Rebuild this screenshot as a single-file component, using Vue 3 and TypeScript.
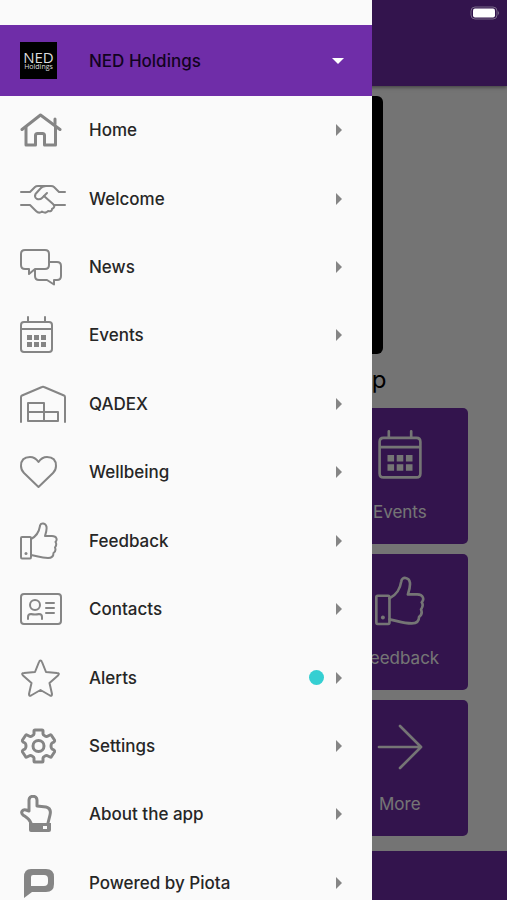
<script setup lang="ts">
interface Shape {
  d: string
  fill?: boolean
}
interface Icon {
  w: number
  h: number
  stroke: number
  shapes: Shape[]
}
interface MenuItem {
  label: string
  icon: string
  alert?: boolean
}

const icons: Record<string, Icon> = {
  home: {
    w: 42, h: 34, stroke: 3,
    shapes: [
      { d: 'M2 16.5 20.5 2 40 16.5' },
      { d: 'M6 14.5V32H15.5V22.5Q15.5 20.5 17.5 20.5H22.5Q24.5 20.5 24.5 22.5V32H35.5V14' },
      { d: 'M35 11V6' },
    ],
  },
  handshake: {
    w: 46, h: 30, stroke: 2,
    shapes: [
      { d: 'M1 8H10L15 3Q16 2 18 2H31Q33 2 34 3L39 8H45' },
      { d: 'M26 2Q22 2 20 5L15.5 10Q14 13 17 15Q20 16 22 14L27 9' },
      { d: 'M24 12 33 20Q36 23 32 25Q32 28 28 27Q26 30 22 27.5Q19 30 16 27L10 21H1' },
      { d: 'M34 21H45' },
    ],
  },
  chat: {
    w: 42, h: 38, stroke: 2,
    shapes: [
      { d: 'M5 2H25Q29 2 29 6V17Q29 21 25 21H15L9 26V21H5Q1 21 1 17V6Q1 2 5 2Z' },
      { d: 'M29 14H37Q41 14 41 18V28Q41 32 37 32H34V36.5L27 32H19Q15 32 15 28V22' },
    ],
  },
  calendar: {
    w: 33, h: 38, stroke: 2,
    shapes: [
      { d: 'M4 6H29Q32 6 32 9V33Q32 36 29 36H4Q1 36 1 33V9Q1 6 4 6ZM1 13H32M8 6V1M25 6V1' },
      { d: 'M7 19h5v5h-5zM14 19h5v5h-5zM21 19h5v5h-5zM7 26h5v5h-5zM14 26h5v5h-5zM21 26h5v5h-5z', fill: true },
    ],
  },
  warehouse: {
    w: 46, h: 38, stroke: 2,
    shapes: [
      { d: 'M1 37V12Q1 11 2 10.5L22 2Q23 1.5 24 2L44 10.5Q45 11 45 12V37' },
      { d: 'M8 36V18H24V36ZM8 27H38V36H8' },
    ],
  },
  heart: {
    w: 38, h: 34, stroke: 2,
    shapes: [
      { d: 'M18.5 32 4 18Q1 15 1 11Q1 2 10 2Q15 2 18.5 7Q22 2 27 2Q36 2 36 11Q36 15 33 18Z' },
    ],
  },
  thumb: {
    w: 38, h: 38, stroke: 2,
    shapes: [
      { d: 'M2 15H10Q11 15 11 16V35Q11 36.5 10 36.5H2Q1 36.5 1 35V16Q1 15 2 15Z' },
      { d: 'M11 17C17 14 19 10 20 4C20.5 0 26 1 26.5 5C27 8 26 11 25 14H32C37 14 37.5 18 35.5 20C37 22 36 24 35 25.5C36 28 35 30 33.5 31C33.5 35 31 36 28 36C21 36 17 34 11 33' },
      { d: 'M4.5 31.5a1.5 1.5 0 1 0 3 0a1.5 1.5 0 1 0 -3 0', fill: true },
    ],
  },
  card: {
    w: 42, h: 34, stroke: 2,
    shapes: [
      { d: 'M4 2H38Q41 2 41 5V29Q41 32 38 32H4Q1 32 1 29V5Q1 2 4 2Z' },
      { d: 'M10 13a5 5 0 1 0 10 0a5 5 0 1 0 -10 0M8 27V25Q8 22 11 22Q15 23 19 22Q22 22 22 25V27M26 11H34M26 16H34M26 21H34' },
    ],
  },
  star: {
    w: 42, h: 38, stroke: 2,
    shapes: [
      { d: 'M20.5 1.5Q21.5 1.5 22 3L26 13L37 14Q40 14 38 16.5L29.500 24L32 35Q32 37.5 30 36.5L20.5 31L11 36.5Q9 37.5 9 35L11.5 24L3 16.5Q1 14 4 14L15 13L19 3Q19.5 1.5 20.5 1.5Z' },
    ],
  },
  gear: {
    w: 37, h: 36, stroke: 3,
    shapes: [
      { d: 'M15 2H22Q23 2 23 3V6Q23 7 25 8Q26.500 9 28 8L30 7Q31 6.500 31.500 7.500L34.500 12Q35 13 34 14L32 15Q31 16 31 18Q31 20 32 21L34 22Q35 23 34.500 24L31.500 28.500Q31 29.500 30 29L28 28Q26.500 27 25 28Q23 29 23 30V33Q23 34 22 34H15Q14 34 14 33V30Q14 29 12 28Q10.500 27 9 28L7 29Q6 29.500 5.500 28.500L2.500 24Q2 23 3 22L5 21Q6 20 6 18Q6 16 5 15L3 14Q2 13 2.500 12L5.500 7.500Q6 6.500 7 7L9 8Q10.500 9 12 8Q14 7 14 6V3Q14 2 15 2Z' },
      { d: 'M13 18a5.5 5.5 0 1 0 11 0a5.5 5.5 0 1 0 -11 0' },
    ],
  },
  pointer: {
    w: 33, h: 38, stroke: 3,
    shapes: [
      { d: 'M11 28C9 23 6 22 3 20C0 17 3 14 6 15L9 16V5C9 0 17 0 17 5V11L26 12C30 13 31 16 30 20L28 28' },
      { d: 'M9 28H31V35Q31 37 29 37H11Q9 37 9 35ZM23 31V34H27V31Z', fill: true },
    ],
  },
  piota: {
    w: 34, h: 30, stroke: 2,
    shapes: [
      { d: 'M11 1H26Q34 1 34 9V16Q34 24 26 24H12L4 30V9Q4 1 11 1ZM13 7Q11 7 11 9V18H24Q28 18 28 14V11Q28 7 24 7Z', fill: true },
    ],
  },
  arrow: {
    w: 38, h: 38, stroke: 2,
    shapes: [{ d: 'M3 19H35M19 3 35 19 19 35' }],
  },
}

const menu: MenuItem[] = [
  { label: 'Home', icon: 'home' },
  { label: 'Welcome', icon: 'handshake' },
  { label: 'News', icon: 'chat' },
  { label: 'Events', icon: 'calendar' },
  { label: 'QADEX', icon: 'warehouse' },
  { label: 'Wellbeing', icon: 'heart' },
  { label: 'Feedback', icon: 'thumb' },
  { label: 'Contacts', icon: 'card' },
  { label: 'Alerts', icon: 'star', alert: true },
  { label: 'Settings', icon: 'gear' },
  { label: 'About the app', icon: 'pointer' },
  { label: 'Powered by Piota', icon: 'piota' },
]

const tiles: MenuItem[] = [
  { label: 'Events', icon: 'calendar' },
  { label: 'Feedback', icon: 'thumb' },
  { label: 'More', icon: 'arrow' },
]
</script>

<template>
  <div class="app">
    <div class="page">
      <header class="topbar"></header>
      <main class="content">
        <div class="hero"></div>
        <h1 class="title">p</h1>
        <div class="tiles">
          <button v-for="tile in tiles" :key="tile.label" type="button" class="tile">
            <svg class="tile-icon" :viewBox="`0 0 ${icons[tile.icon].w} ${icons[tile.icon].h}`" :stroke-width="icons[tile.icon].stroke" aria-hidden="true">
              <path v-for="(s, i) in icons[tile.icon].shapes" :key="i" :d="s.d" :class="{ solid: s.fill }" />
            </svg>
            <span>{{ tile.label }}</span>
          </button>
        </div>
      </main>
      <footer class="bottombar"></footer>
    </div>
    <div class="scrim"></div>
    <svg class="battery" width="30" height="14" viewBox="0 0 30 14" aria-hidden="true">
      <rect x="1" y="1" width="26" height="12" rx="4" fill="none" stroke="#796888" stroke-width="1" />
      <rect x="3" y="2.500" width="22" height="9" rx="2" fill="#fff" />
      <path d="M28 5Q30 7 28 9Z" fill="#796888" />
    </svg>

    <nav class="drawer">
      <div class="drawer-status"></div>
      <button type="button" class="account">
        <span class="slot">
          <span class="logo"><span class="logo-main">NED</span><span class="logo-sub">Holdings</span></span>
        </span>
        <span class="label">NED Holdings</span>
        <svg class="caret" width="12" height="6" viewBox="0 0 12 6" aria-hidden="true"><path d="M0 0H12L6 6Z" /></svg>
      </button>
      <ul class="menu">
        <li v-for="item in menu" :key="item.label">
          <a href="#" class="row">
            <span class="slot">
              <svg class="icon" :width="icons[item.icon].w" :height="icons[item.icon].h" :viewBox="`0 0 ${icons[item.icon].w} ${icons[item.icon].h}`" :stroke-width="icons[item.icon].stroke" aria-hidden="true">
                <path v-for="(s, i) in icons[item.icon].shapes" :key="i" :d="s.d" :class="{ solid: s.fill }" />
              </svg>
            </span>
            <span class="label">{{ item.label }}</span>
            <span v-if="item.alert" class="dot"></span>
            <svg class="chevron" width="6" height="12" viewBox="0 0 6 12" aria-hidden="true"><path d="M0 0 6 6 0 12Z" /></svg>
          </a>
        </li>
      </ul>
    </nav>
  </div>
</template>

<style>
body {
  margin: 0;
}
</style>

<style scoped>
.app {
  position: relative;
  height: 100vh;
  overflow: hidden;
  font-family: Inter, "Liberation Sans", sans-serif;
  font-size: 17px;
  line-height: 24px;
}
.page {
  display: flex;
  flex-direction: column;
  height: 100%;
  background: #fcfcfc;
}
.topbar {
  flex: none;
  height: 86px;
  background: #6f2da8;
  box-shadow: 0 1px 4px rgba(0, 0, 0, 0.5);
}
.content {
  flex: 1;
  padding: 10px 39px 0;
}
.hero {
  width: 258px;
  aspect-ratio: 1;
  margin: 0 auto;
  border-radius: 6px;
  background: #000;
}
.title {
  width: 266px;
  margin: 10px auto 12px;
  font-size: 24px;
  font-weight: 400;
  line-height: 32px;
  text-align: right;
}
.tiles {
  display: grid;
  grid-template-columns: repeat(3, 1fr);
  gap: 10px;
}
.tile {
  grid-column: 3;
  display: flex;
  flex-direction: column;
  align-items: center;
  gap: 20px;
  height: 136px;
  padding: 22px 0 0;
  border: 0;
  border-radius: 5px;
  background: #6f2da8;
  color: #fff;
  font: inherit;
}
.tile-icon {
  width: 50px;
  height: 50px;
  fill: none;
  stroke: currentColor;
  stroke-linecap: round;
  stroke-linejoin: round;
}
.bottombar {
  flex: none;
  height: 49px;
  background: #6f2da8;
}
.scrim {
  position: absolute;
  inset: 0;
  background: rgba(0, 0, 0, 0.54);
}
.battery {
  position: absolute;
  top: 6px;
  right: 7px;
}
.drawer {
  position: absolute;
  inset: 0 135px 0 0;
  overflow: hidden;
  background: #fafafa;
  color: #262626;
  font-weight: 500;
}
.drawer-status {
  height: 25px;
}
.account,
.row {
  display: flex;
  align-items: center;
  box-sizing: border-box;
  width: 100%;
  padding: 0 28px 0 20px;
  border: 0;
  color: inherit;
  font: inherit;
  text-align: left;
  text-decoration: none;
}
.account {
  height: 71px;
  background: #6f2da8;
  color: #12031f;
}
.slot {
  display: flex;
  flex: none;
  width: 69px;
}
.label {
  flex: 1;
}
.logo {
  display: flex;
  flex-direction: column;
  align-items: center;
  justify-content: center;
  width: 37px;
  height: 37px;
  background: #000;
  color: #ddd;
  font-family: "Open Sans", sans-serif;
  font-weight: 400;
}
.logo-main {
  font-size: 15px;
  line-height: 12px;
}
.logo-sub {
  font-size: 7px;
  line-height: 7px;
}
.caret {
  fill: #fff;
}
.menu {
  display: grid;
  grid-auto-rows: 1fr;
  min-height: calc(100vh - 79px);
  margin: 0;
  padding: 0;
  list-style: none;
}
.row {
  height: 100%;
}
.icon {
  fill: none;
  stroke: #858585;
  stroke-linecap: round;
  stroke-linejoin: round;
}
.icon .solid {
  fill: #858585;
  fill-rule: evenodd;
  stroke: none;
}
.tile-icon .solid {
  fill: currentColor;
  stroke: none;
}
.dot {
  width: 15px;
  height: 15px;
  margin-right: 12px;
  border-radius: 50%;
  background: #35cfd2;
}
.chevron {
  margin-right: 2px;
  fill: #858585;
}
</style>
